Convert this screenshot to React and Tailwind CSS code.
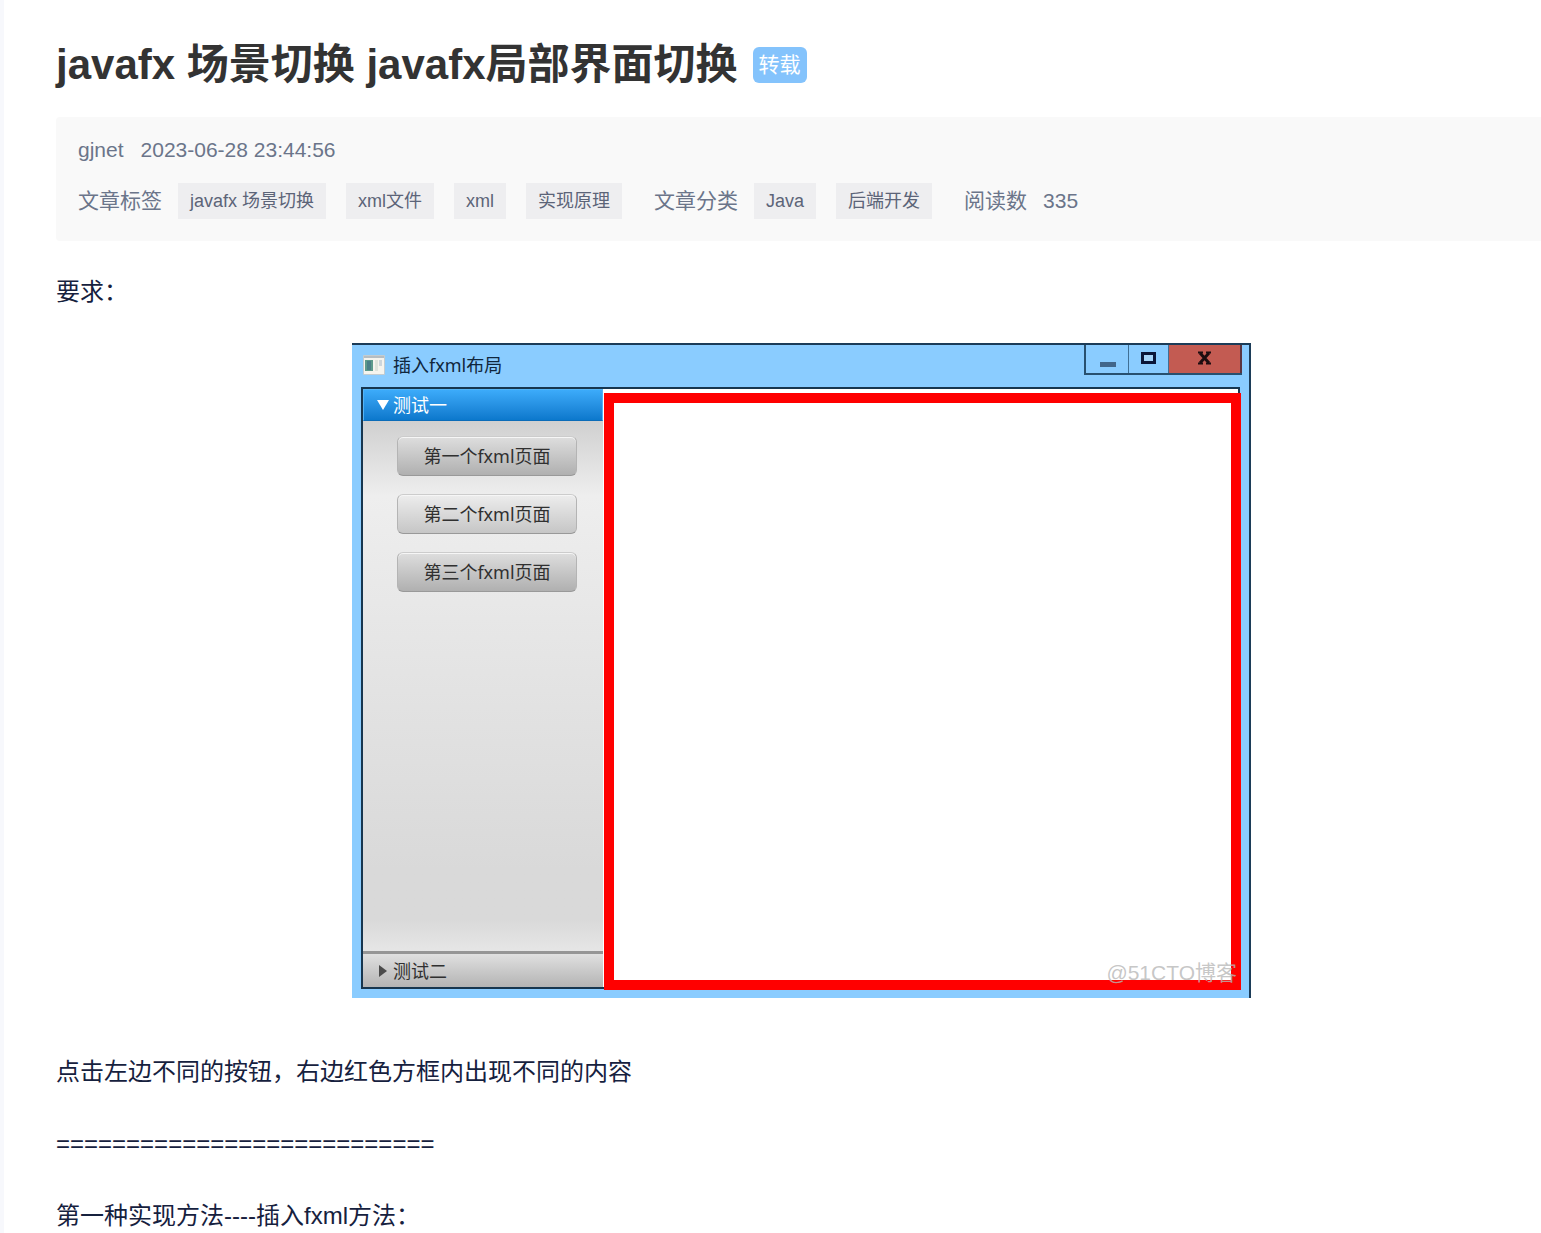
const tags = ['javafx 场景切换', 'xml文件', 'xml', '实现原理'];
const categories = ['Java', '后端开发'];
const pages = [
  { label: '第一个fxml页面', look: 'from-[#dedede] to-[#b0b0b0]' },
  { label: '第二个fxml页面', look: 'from-[#ededed] to-[#c6c6c6]' },
  { label: '第三个fxml页面', look: 'from-[#dedede] to-[#b0b0b0]' },
];

function TagList({ items }) {
  return (
    <div className="flex flex-wrap gap-5">
      {items.map((item) => (
        <a key={item} href="#" className="bg-[#eeeef0] px-3 text-[18px] leading-9 text-[#5c6478]">
          {item}
        </a>
      ))}
    </div>
  );
}

function AppIcon() {
  return (
    <svg width="22" height="20" viewBox="0 0 22 20" aria-hidden="true">
      <rect width="22" height="20" rx="1" fill="#c3ccd0" />
      <rect x="1" y="3" width="20" height="16" fill="#f5f4ee" />
      <rect x="1" y="1" width="20" height="2" fill="#b5bdc2" />
      <rect x="2" y="5" width="8" height="11" fill="#5d9a8b" />
      <rect x="4" y="6" width="4" height="9" fill="#4a7f86" />
      <rect x="12" y="5" width="3" height="11" fill="#dfe4dc" />
      <rect x="16" y="5" width="3" height="6" fill="#cdd6dc" />
    </svg>
  );
}

function CaptionButtons() {
  return (
    <div className="flex h-[30px] border-b-2 border-l-2 border-[#28506f]">
      <button type="button" aria-label="最小化" className="w-[43px] border-r border-[#3f6f95]">
        <svg width="42" height="28" viewBox="0 0 42 28" aria-hidden="true">
          <rect x="14" y="17" width="16" height="5" fill="#42668a" />
        </svg>
      </button>
      <button type="button" aria-label="最大化" className="w-10 border-r border-[#3f6f95]">
        <svg width="39" height="28" viewBox="0 0 39 28" aria-hidden="true">
          <rect x="13.5" y="8.5" width="12" height="9" fill="#a5d4f8" stroke="#0a1638" strokeWidth="3" />
        </svg>
      </button>
      <button type="button" aria-label="关闭" className="w-[73px] border-r-2 border-[#5b3540] bg-[#c35b52]">
        <svg width="71" height="28" viewBox="0 0 71 28" aria-hidden="true">
          <path d="M31 8l9 10M40 8l-9 10" stroke="#1c0d10" strokeWidth="3" />
          <path d="M29 7.5h5M37 7.5h5M29 18.5h5M37 18.5h5" stroke="#1c0d10" strokeWidth="2" />
        </svg>
      </button>
    </div>
  );
}

function DemoWindow() {
  return (
    <figure className="mx-auto flex w-full max-w-[899px] flex-col border-t-2 border-r-2 border-[#1c3c58] bg-[#8accff] pb-[9px] font-['Noto_Sans','Noto_Sans_CJK_SC',sans-serif] text-[18px]">
      <div className="flex h-[42px] items-start justify-between pr-[7px] pl-[11px]">
        <figcaption className="flex h-10 items-center gap-2 text-[#10263c]">
          <AppIcon />
          插入fxml布局
        </figcaption>
        <CaptionButtons />
      </div>
      <div className="mr-[9px] ml-[9px] flex min-h-[602px] border-2 border-[#17364f] bg-white">
        <div className="flex w-60 shrink-0 flex-col">
          <button type="button" className="flex h-8 items-center gap-1 border border-[#55b4f5] border-b-[#0b6cb8] bg-linear-to-b from-[#3cabfa] to-[#0b78cc] pl-[13px] text-white">
            <svg width="12" height="10" viewBox="0 0 12 10" aria-hidden="true">
              <path d="M0 0h12L6 10z" fill="#fff" />
            </svg>
            测试一
          </button>
          <div className="flex grow flex-col items-center gap-[18px] bg-linear-to-b from-[#d0d0d0] via-[#eeeeee] via-15% to-[#d9d9d9] to-90% pt-[15px] pl-2">
            {pages.map((page) => (
              <button
                key={page.label}
                type="button"
                className={`h-10 w-[180px] rounded-md border border-[#b4b4b4] border-t-[#cccccc] border-b-[#999999] bg-linear-to-b text-[#303030] inset-shadow-[0_1px_0_#f6f6f6] ${page.look}`}
              >
                {page.label}
              </button>
            ))}
          </div>
          <div className="h-8 bg-linear-to-b from-[#d9d9d9] to-[#e6e6e6]" />
          <button type="button" className="flex h-9 items-center gap-1 border-t-3 border-[#969696] bg-linear-to-b from-[#e0e0e0] to-[#b4b4b4] pl-[15px] text-[#303030]">
            <svg width="11" height="12" viewBox="0 0 11 12" aria-hidden="true">
              <path d="M1 0v12l8-6z" fill="#4b4b4b" />
            </svg>
            测试二
          </button>
        </div>
        <div className="mt-1 -mr-[3px] -mb-[3px] ml-px flex grow items-end justify-end border-[10px] border-[#ff0000]">
          <span className="-mr-[6px] -mb-[7px] font-['Liberation_Sans','Noto_Sans_CJK_SC',sans-serif] text-[21px] leading-7 text-[#b8b8b8]/80">
            @51CTO博客
          </span>
        </div>
      </div>
    </figure>
  );
}

export default function App() {
  return (
    <div className="overflow-x-hidden border-l-4 border-[#f7f8fc] bg-white font-['Liberation_Sans','Noto_Sans_CJK_SC',sans-serif]">
      <article className="-mr-[6px] pl-[52px] text-[24px] leading-9 text-[#16213e]">
        <header>
          <div className="flex items-center gap-[15px] pt-[37px] pb-6">
            <h1 className="text-[42px] leading-[56px] font-bold text-[#333333]">javafx 场景切换 javafx局部界面切换</h1>
            <span className="rounded-md bg-[#84c3fc] px-[6px] text-[21px] leading-9 text-white">转载</span>
          </div>
          <div className="rounded bg-[#f9f9f9] px-[22px] pt-[17px] pb-[22px] text-[21px] leading-8 text-[#6b758a]">
            <div className="flex gap-[17px]">
              <a href="#">gjnet</a>
              <time>2023-06-28 23:44:56</time>
            </div>
            <div className="mt-[17px] flex flex-wrap items-center gap-8">
              <div className="flex items-center gap-4">
                <span>文章标签</span>
                <TagList items={tags} />
              </div>
              <div className="flex items-center gap-4">
                <span>文章分类</span>
                <TagList items={categories} />
              </div>
              <div className="flex items-center gap-4">
                <span>阅读数</span>
                <span>335</span>
              </div>
            </div>
          </div>
        </header>
        <p className="mt-[33px] mb-[33px]">要求：</p>
        <DemoWindow />
        <div className="mt-14 flex flex-col gap-9">
          <p>点击左边不同的按钮，右边红色方框内出现不同的内容</p>
          <p>===========================</p>
          <p>第一种实现方法----插入fxml方法：</p>
        </div>
      </article>
    </div>
  );
}
